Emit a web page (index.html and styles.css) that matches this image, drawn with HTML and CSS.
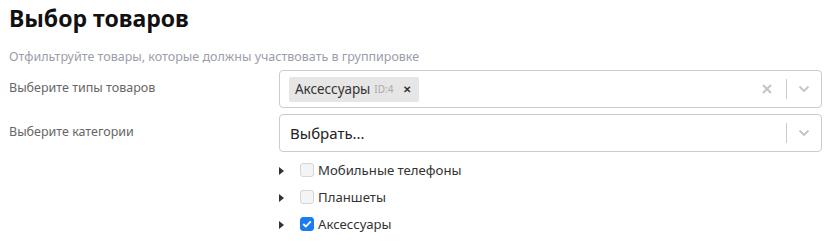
FILE: index.html
```html
<!DOCTYPE html>
<html lang="ru">
  <head>
    <meta charset="UTF-8" />
    <title>Выбор товаров</title>
    <link rel="stylesheet" href="styles.css">
  </head>
  <body>
    <div class="page">
      <h2 class="title">Выбор товаров</h2>
      <p class="hint">Отфильтруйте товары, которые должны участвовать в группировке</p>

      <div class="form-row">
        <label class="form-label">Выберите типы товаров</label>
        <div class="select">
          <div class="select-value">
            <span class="tag">
              <span class="tag-name">Аксессуары</span>
              <span class="tag-id">ID:4</span>
              <span class="tag-remove">&#x2715;</span>
            </span>
          </div>
          <div class="select-indicators">
            <svg class="select-clear" width="12" height="12" viewBox="0 0 12 12">
              <path d="M2 2 L10 10 M10 2 L2 10" stroke="#c4c4c4" stroke-width="2" />
            </svg>
            <span class="select-sep"></span>
            <svg class="select-arrow" width="12" height="8" viewBox="0 0 12 8">
              <path d="M1.5 1.5 L6 6 L10.5 1.5" stroke="#c4c4c4" stroke-width="1.8" fill="none" />
            </svg>
          </div>
        </div>
      </div>

      <div class="form-row">
        <label class="form-label">Выберите категории</label>
        <div class="select">
          <div class="select-value placeholder">Выбрать...</div>
          <div class="select-indicators">
            <span class="select-sep"></span>
            <svg class="select-arrow" width="12" height="8" viewBox="0 0 12 8">
              <path d="M1.5 1.5 L6 6 L10.5 1.5" stroke="#c4c4c4" stroke-width="1.8" fill="none" />
            </svg>
          </div>
        </div>
      </div>

      <ul class="tree">
        <li class="tree-item">
          <span class="tree-toggle"></span>
          <span class="checkbox"></span>
          <span class="tree-label">Мобильные телефоны</span>
        </li>
        <li class="tree-item">
          <span class="tree-toggle"></span>
          <span class="checkbox"></span>
          <span class="tree-label">Планшеты</span>
        </li>
        <li class="tree-item">
          <span class="tree-toggle"></span>
          <span class="checkbox checked">
            <svg width="10" height="8" viewBox="0 0 10 8">
              <path d="M1.2 4 L3.8 6.5 L8.8 1.3" stroke="#fff" stroke-width="1.8" fill="none" />
            </svg>
          </span>
          <span class="tree-label">Аксессуары</span>
        </li>
      </ul>
    </div>
  </body>
</html>
```

FILE: styles.css
```css
* {
  margin: 0;
  padding: 0;
  box-sizing: border-box;
}

body {
  font-family: "Noto Sans", "Open Sans", Arial, sans-serif;
  background: #fff;
  color: #333;
}

.page {
  padding: 2px 13px 0 9px;
}

.title {
  font-size: 23px;
  font-weight: 700;
  color: #111;
  line-height: 32px;
}

.hint {
  margin-top: 14px;
  font-size: 12.5px;
  color: #9a9daa;
  line-height: 18px;
}

.form-row {
  display: grid;
  grid-template-columns: 270px 1fr;
  align-items: center;
  margin-top: 4px;
}

.form-row + .form-row {
  margin-top: 6px;
}

.form-label {
  font-size: 12.5px;
  color: #666;
  padding-bottom: 4px;
}

.select {
  display: flex;
  align-items: center;
  height: 38px;
  border: 1px solid #ccc;
  border-radius: 4px;
  background: #fff;
}

.select-value {
  flex: 1;
  display: flex;
  align-items: center;
  padding: 0 9px;
}

.placeholder {
  font-size: 15px;
  color: #222;
  padding-left: 10px;
}

.tag {
  display: flex;
  align-items: center;
  height: 25px;
  padding: 0 8px 0 6px;
  background: #e6e6e6;
  border-radius: 2px;
}

.tag-name {
  font-size: 13.5px;
  color: #333;
}

.tag-id {
  font-size: 10px;
  color: #aaa;
  margin-left: 4px;
}

.tag-remove {
  font-size: 10px;
  font-weight: 700;
  color: #333;
  margin-left: 10px;
}

.select-indicators {
  display: flex;
  align-items: center;
  padding-right: 11px;
}

.select-clear {
  margin-right: 13px;
}

.select-sep {
  width: 1px;
  height: 20px;
  background: #ccc;
  margin-right: 11px;
}

.tree {
  list-style: none;
  margin: 4px 0 0 270px;
}

.tree-item {
  display: flex;
  align-items: center;
  height: 27px;
}

.tree-toggle {
  width: 0;
  height: 0;
  border-top: 4px solid transparent;
  border-bottom: 4px solid transparent;
  border-left: 5px solid #333;
  margin: 2px 16px 0 0;
}

.checkbox {
  display: flex;
  align-items: center;
  justify-content: center;
  width: 14px;
  height: 14px;
  border: 1px solid #d4d6dc;
  border-radius: 3px;
  background: #f3f4f6;
  margin-right: 4px;
}

.checkbox.checked {
  background: #1a7cf0;
  border-color: #1a7cf0;
}

.tree-label {
  font-size: 13.2px;
  color: #333;
}
```
